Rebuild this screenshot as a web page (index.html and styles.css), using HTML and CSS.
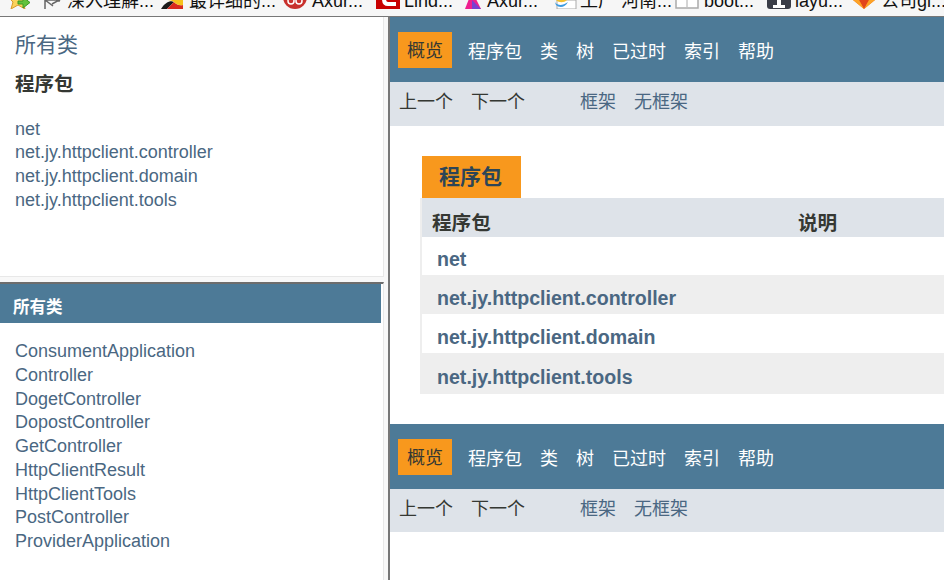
FILE: index.html
```html
<!DOCTYPE html>
<html lang="en">
<head>
    <meta charset="UTF-8">
    <meta name="viewport" content="width=device-width, initial-scale=1.0">
    <title>概览</title>
    <link rel="stylesheet" href="styles.css">
</head>
<body>
    <div class="bookmarks">
        <svg class="mark mark-star" width="24" height="24" viewBox="0 0 24 24"><path d="M10 5l3 7h7l-5 5 2 7-7-4-7 4 2-7-5-5h7z" fill="#fbd35c" stroke="#d9982c"/><path d="M10 16h5v-4l7 5.500-7 5.500v-4h-5z" fill="#62c23c" stroke="#3d9a22"/></svg>
        <svg class="mark mark-edit" width="24" height="24" viewBox="0 0 24 24"><path d="M20 16l-3-1h-12v9M5 15l8 6M12 19l9-5" fill="none" stroke="#666" stroke-width="1.500"/></svg>
        <span class="mark-text text-a">深入理解...</span>
        <svg class="mark mark-flag" width="24" height="24" viewBox="0 0 24 24"><path d="M1 24c4-7 10-9 13-7l-7 7z" fill="#1a1a1a"/><path d="M7 24l7-7c2 2 5 4 9 3v4z" fill="#d92b1f"/><path d="M5 15h18v5c-4 1-7-1-9-3-3-2-6-2-9-2z" fill="#f6c21c"/></svg>
        <span class="mark-text text-b">最详细的...</span>
        <svg class="mark mark-round" width="24" height="24" viewBox="0 0 24 24"><circle cx="12" cy="12" r="12" fill="#c8302c"/><circle cx="8" cy="16" r="3" fill="none" stroke="#fff" stroke-width="1.500"/><circle cx="16" cy="16" r="3" fill="none" stroke="#fff" stroke-width="1.500"/></svg>
        <span class="mark-text text-c">Axur...</span>
        <svg class="mark mark-lind" width="24" height="24" viewBox="0 0 24 24"><rect width="24" height="24" fill="#c80000"/><path d="M20 19h-8c-3 0-4-2-4-5" fill="none" stroke="#fff" stroke-width="4"/></svg>
        <span class="mark-text text-d">Lind...</span>
        <svg class="mark mark-pink" width="24" height="24" viewBox="0 0 24 24"><path d="M4 24l7-18 9 18z" fill="#ee1f8f"/><path d="M11 15l9 9h-9z" fill="#7a3fd0"/></svg>
        <span class="mark-text text-c">Axur...</span>
        <svg class="mark mark-page" width="24" height="24" viewBox="0 0 24 24"><path d="M4 15h19v9h-19z" fill="#fff" stroke="#aaa"/><path d="M1 15c1 5 7 7 14 2-3 6-9 6-12 3z" fill="#3d9be0"/><path d="M3 15h11c-3 3-8 3-11 0z" fill="#f2c230"/></svg>
        <span class="mark-text text-e">工厂 河南...</span>
        <svg class="mark mark-doc" width="24" height="24" viewBox="0 0 24 24"><rect x="1" y="8" width="22" height="15" fill="#fff" stroke="#aaa" stroke-width="1.500"/><path d="M2 14h20M12 14v8" stroke="#aaa"/></svg>
        <span class="mark-text text-c">boot...</span>
        <svg class="mark mark-layu" width="24" height="24" viewBox="0 0 24 24"><rect width="24" height="24" rx="3" fill="#3a3d47"/><path d="M10 15h4v5h4v3h-12v-3h4z" fill="#fff"/></svg>
        <span class="mark-text text-d">layu...</span>
        <svg class="mark mark-fox" width="26" height="24" viewBox="0 0 26 24"><path d="M2 15l11 9 11-9z" fill="#f0681f"/><path d="M8 15l5 9 5-9z" fill="#e2451c"/><path d="M2 15l6 0 5 9z" fill="#fca326"/><path d="M24 15l-6 0-5 9z" fill="#fca326"/></svg>
        <span class="mark-text">公司gi...</span>
    </div>

    <div class="frames">
        <div class="side">
            <div class="pane-top">
                <h1 class="side-title"><a href="#">所有类</a></h1>
                <h2 class="side-head">程序包</h2>
                <ul class="link-list">
                    <li><a href="#">net</a></li>
                    <li><a href="#">net.jy.httpclient.controller</a></li>
                    <li><a href="#">net.jy.httpclient.domain</a></li>
                    <li><a href="#">net.jy.httpclient.tools</a></li>
                </ul>
            </div>
            <div class="pane-bottom">
                <div class="bar-title">所有类</div>
                <ul class="link-list">
                    <li><a href="#">ConsumentApplication</a></li>
                    <li><a href="#">Controller</a></li>
                    <li><a href="#">DogetController</a></li>
                    <li><a href="#">DopostController</a></li>
                    <li><a href="#">GetController</a></li>
                    <li><a href="#">HttpClientResult</a></li>
                    <li><a href="#">HttpClientTools</a></li>
                    <li><a href="#">PostController</a></li>
                    <li><a href="#">ProviderApplication</a></li>
                </ul>
            </div>
        </div>

        <div class="main">
            <div class="topnav">
                <span class="nav-active">概览</span>
                <a href="#">程序包</a>
                <a href="#">类</a>
                <a href="#">树</a>
                <a href="#">已过时</a>
                <a href="#">索引</a>
                <a href="#">帮助</a>
            </div>
            <div class="subnav">
                <span>上一个</span>
                <span>下一个</span>
                <a class="first-link" href="#">框架</a>
                <a href="#">无框架</a>
            </div>

            <div class="content">
                <div class="caption">程序包</div>
                <table class="summary">
                    <thead>
                        <tr>
                            <th class="col-first">程序包</th>
                            <th>说明</th>
                        </tr>
                    </thead>
                    <tbody>
                        <tr class="first"><td><a href="#">net</a></td><td></td></tr>
                        <tr class="alt"><td><a href="#">net.jy.httpclient.controller</a></td><td></td></tr>
                        <tr><td><a href="#">net.jy.httpclient.domain</a></td><td></td></tr>
                        <tr class="alt last"><td><a href="#">net.jy.httpclient.tools</a></td><td></td></tr>
                    </tbody>
                </table>
            </div>

            <div class="topnav">
                <span class="nav-active">概览</span>
                <a href="#">程序包</a>
                <a href="#">类</a>
                <a href="#">树</a>
                <a href="#">已过时</a>
                <a href="#">索引</a>
                <a href="#">帮助</a>
            </div>
            <div class="subnav subnav-bottom">
                <span>上一个</span>
                <span>下一个</span>
                <a class="first-link" href="#">框架</a>
                <a href="#">无框架</a>
            </div>
        </div>
    </div>
</body>
</html>
```

FILE: styles.css
```css
html, body {
    height: 580px;
    overflow: hidden;
}

body {
    margin: 0;
    display: flex;
    flex-direction: column;
    font-family: "Liberation Sans", "Noto Sans CJK SC", sans-serif;
    font-size: 18px;
    color: #353833;
    background-color: #fff;
}

a {
    color: #4a6782;
    text-decoration: none;
}

/* browser bookmarks, cut off by the screenshot */
.bookmarks {
    flex: none;
    box-sizing: border-box;
    height: 17px;
    display: flex;
    align-items: flex-start;
    overflow: hidden;
    background-color: #f6f6f6;
    border-bottom: 1px solid #777;
    color: #111;
    font-size: 18px;
    white-space: nowrap;
}

.mark {
    flex: none;
    margin-top: -15px;
}

.mark-text {
    flex: none;
    margin-top: -11px;
    line-height: 24px;
}

.mark-star { margin-left: 8px; }
.mark-edit { margin-left: 8px; margin-right: 3px; }
.mark-flag { margin-left: 8px; margin-right: 5px; }
.mark-round { margin-left: 10px; margin-right: 5px; }
.mark-lind { margin-left: 12px; margin-right: 4px; }
.mark-pink { margin-left: 8px; margin-right: 2px; }
.mark-page { margin-left: 14px; margin-right: 3px; }
.mark-doc { margin-left: 9px; margin-right: 5px; }
.mark-layu { margin-left: 11px; margin-right: 4px; }
.mark-fox { margin-left: 7px; margin-right: 4px; }

.text-a { width: 85px; }
.text-b { width: 84px; }
.text-c { width: 52px; }
.text-d { width: 49px; }
.text-e { width: 86px; }

.frames {
    flex: 1;
    min-height: 0;
    display: flex;
}

/* left frames */
.side {
    flex: none;
    width: 388px;
    display: flex;
    flex-direction: column;
    background-color: #f8f8f8;
    border-right: 2px solid #777;
}

.pane-top {
    box-sizing: border-box;
    height: 260px;
    width: 384px;
    padding: 15px 15px 0;
    background-color: #fff;
    border-right: 1px solid #e8e8e8;
    border-bottom: 1px solid #e8e8e8;
}

.side-title {
    margin: 0;
    font-size: 21px;
    font-weight: normal;
    line-height: 26px;
}

.side-head {
    margin: 12px 0 0;
    font-size: 19.5px;
    line-height: 28px;
}

.link-list {
    margin: 0;
    padding: 0 15px;
    list-style: none;
    line-height: 23.75px;
}

.pane-top .link-list {
    margin-top: 19.5px;
    padding: 0;
}

.pane-bottom {
    flex: 1;
    width: 384px;
    margin-top: 5px;
    padding-right: 2px;
    box-sizing: border-box;
    background-color: #fff;
    border-top: 2px solid #6d6d6d;
    border-right: 1px solid #e8e8e8;
}

.bar-title {
    height: 39px;
    padding-left: 13px;
    line-height: 47px;
    font-size: 16.5px;
    font-weight: bold;
    color: #fff;
    background-color: #4d7a97;
}

.pane-bottom .link-list {
    margin-top: 17px;
}

/* right frame */
.main {
    flex: 1;
    min-width: 0;
    overflow: hidden;
}

.topnav {
    box-sizing: border-box;
    height: 65px;
    padding-left: 8px;
    display: flex;
    align-items: center;
    gap: 18px;
    background-color: #4d7a97;
    white-space: nowrap;
}

.topnav a {
    color: #fff;
}

.nav-active {
    margin-right: -2px;
    padding: 3px 9px 0;
    line-height: 33px;
    color: #353833;
    background-color: #f8981d;
}

.subnav {
    box-sizing: border-box;
    height: 44px;
    padding: 0 0 8px 9px;
    display: flex;
    align-items: center;
    gap: 18px;
    background-color: #dee3e9;
    white-space: nowrap;
}

.subnav-bottom {
    height: 43px;
}

.first-link {
    margin-left: 37px;
}

.content {
    padding: 30px 0 30px 30px;
}

.caption {
    width: 99px;
    height: 42px;
    margin-left: 2px;
    box-sizing: border-box;
    padding-left: 17px;
    line-height: 42px;
    font-size: 21px;
    font-weight: bold;
    color: #2c4557;
    background-color: #f8981d;
}

.summary {
    width: 700px;
    table-layout: fixed;
    border-collapse: collapse;
    border-left: 2px solid #eee;
    font-size: 19.6px;
}

.summary th {
    height: 39px;
    padding: 8px 10px 0;
    box-sizing: border-box;
    text-align: left;
    background-color: #dee3e9;
}

.col-first {
    width: 367px;
}

.summary td {
    height: 39px;
    padding: 7px 15px 0;
    box-sizing: border-box;
    font-weight: bold;
    white-space: nowrap;
}

.summary .first td {
    height: 38px;
}

.summary .alt td {
    background-color: #eee;
}

.summary .last td {
    height: 41px;
}
```
